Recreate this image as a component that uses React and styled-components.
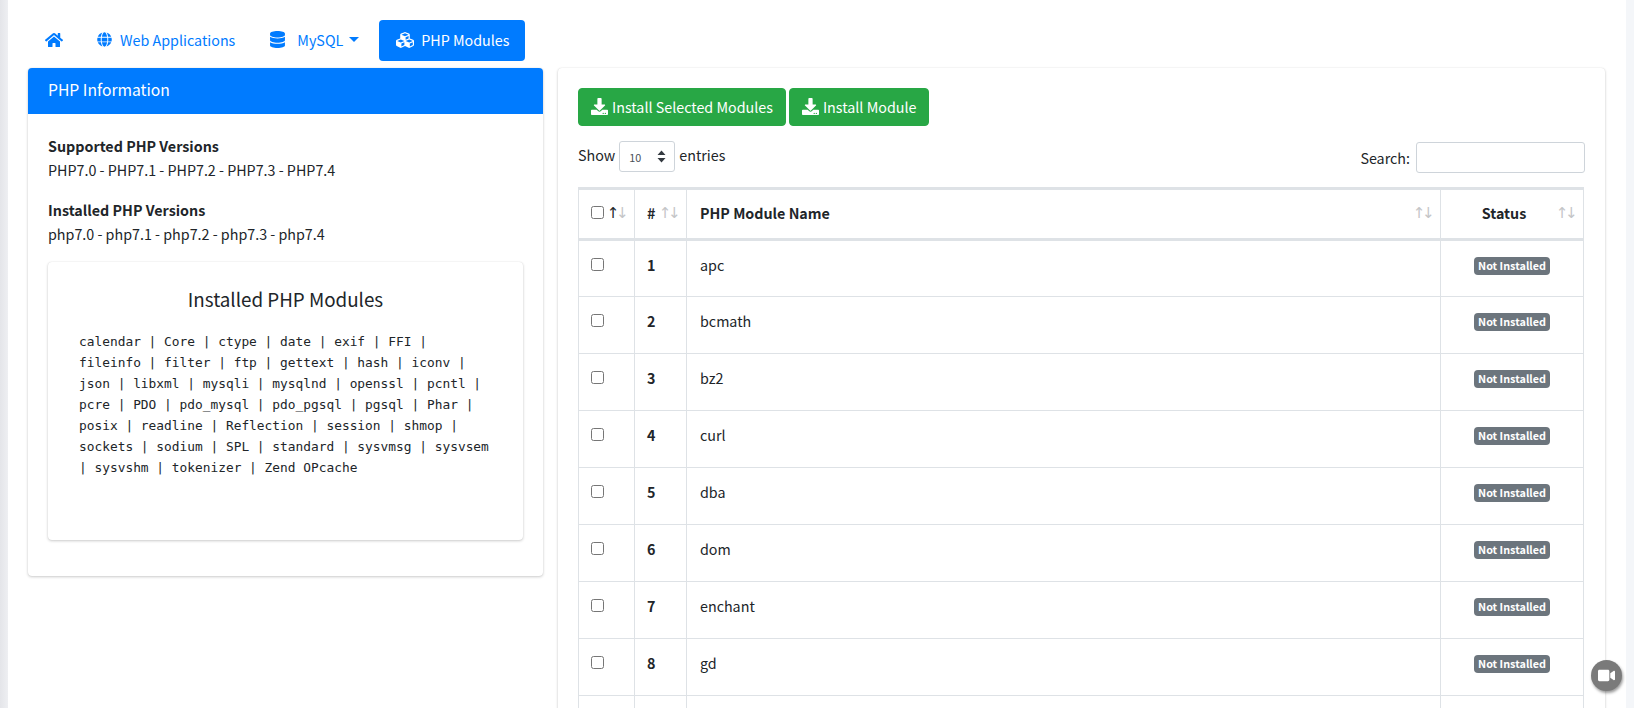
import React from 'react'
import styled, { createGlobalStyle } from 'styled-components'
import { FaHome, FaGlobe, FaDatabase, FaCubes, FaDownload, FaVideo } from 'react-icons/fa'

const SANS = `"Noto Sans CJK SC", "Noto Sans", sans-serif`
const MONO = `"DejaVu Sans Mono", "Liberation Mono", monospace`

const GlobalStyle = createGlobalStyle`
	html, body {
		margin: 0;
		height: 708px;
		overflow: hidden;
		background: linear-gradient(to right, #e4e5e9 0, #eeeff2 8px, #f4f6f9 8px);
		font-family: ${SANS};
		font-size: 14.3px;
		color: #212529;
	}
	* {
		box-sizing: border-box;
	}
`

const Shell = styled.div`
	margin: 0 8px;
	height: 708px;
	overflow: hidden;
	background: #fff;
	padding: 20px 21px 0 20px;
`

const TabBar = styled.nav`
	display: flex;
	gap: 1px;
	height: 41px;
	margin-bottom: 7px;
`

const Tab = styled.a`
	display: flex;
	align-items: center;
	gap: ${props => props.$gap || 8}px;
	padding: 0 16px 2px 17px;
	border-radius: 4px;
	font-size: 14.3px;
	color: ${props => props.$active ? '#fff' : '#007bff'};
	background: ${props => props.$active ? '#007bff' : 'transparent'};
	margin-left: ${props => props.$active ? 3 : 0}px;
`

const Caret = styled.span`
	width: 0;
	height: 0;
	margin-left: -5px;
	border-top: 5px solid #007bff;
	border-left: 5.5px solid transparent;
	border-right: 5.5px solid transparent;
`

const Columns = styled.div`
	display: flex;
	align-items: flex-start;
	gap: 15px;
`

const Card = styled.section`
	background: #fff;
	border-radius: 4px;
	box-shadow: 0 0 1px rgba(0, 0, 0, .125), 0 1px 3px rgba(0, 0, 0, .2);
`

const InfoCard = styled(Card)`
	width: 515px;
	flex: none;
	height: 508px;
	overflow: hidden;
`

const InfoHeader = styled.header`
	display: flex;
	align-items: center;
	height: 46px;
	padding: 0 20px 3px;
	background: #007bff;
	color: #fff;
	font-size: 15.7px;
`

const InfoBody = styled.div`
	padding: 20px 20px;
`

const VersionBlock = styled.div`
	margin-bottom: 16px;
	line-height: 24px;
`

const VersionTitle = styled.div`
	font-weight: 700;
`

const ModulesCard = styled(Card)`
	padding: 20px 31px 20px 31px;
	height: 278px;
	margin-top: 8px;
`

const ModulesTitle = styled.h3`
	margin: 2px 0 17px;
	text-align: center;
	font-size: 18.8px;
	font-weight: 400;
	line-height: 30px;
`

const ModulesText = styled.p`
	margin: 0;
	font-family: ${MONO};
	font-size: 12.85px;
	line-height: 21px;
	color: #212529;
`

const TableCard = styled(Card)`
	flex: 1;
	height: 700px;
	padding: 20px 20px;
`

const ButtonRow = styled.div`
	display: flex;
	gap: 3px;
	margin-bottom: 15px;
`

const GreenButton = styled.button`
	display: flex;
	align-items: center;
	gap: 4px;
	height: 38px;
	padding: 0 12px 2px 12px;
	border: 1px solid #28a745;
	border-radius: 4px;
	background: #28a745;
	color: #fff;
	font-family: ${SANS};
	font-size: 14.3px;
`

const Controls = styled.div`
	display: flex;
	justify-content: space-between;
	align-items: flex-start;
	height: 46px;
`

const ControlLabel = styled.label`
	display: flex;
	align-items: center;
	gap: 4px;
	font-size: 14.3px;
	margin-top: ${props => props.$offset || 0}px;
`

const ShowText = styled.span`
	position: relative;
	top: -2px;
`

const LengthSelect = styled.div`
	display: flex;
	align-items: center;
	justify-content: space-between;
	width: 56px;
	height: 31px;
	padding: 0 8px 0 9px;
	border: 1px solid #ced4da;
	border-radius: 3px;
	font-family: ${SANS};
	font-size: 10.8px;
	color: #495057;
`

const SearchBox = styled.input`
	width: 169px;
	height: 31px;
	margin-left: 2px;
	border: 1px solid #ced4da;
	border-radius: 3px;
`

const DataTable = styled.table`
	width: 1006px;
	table-layout: fixed;
	border-collapse: collapse;
	border: 1px solid #dee2e6;
	border-top: 3px solid #dee2e6;
`

const HeadCell = styled.th`
	position: relative;
	height: 51px;
	padding: 0 12px 4px ${props => props.$name ? 13 : 12}px;
	border: 1px solid #dee2e6;
	border-top: 0;
	border-bottom: 3px solid #dee2e6;
	text-align: ${props => props.$center ? 'center' : 'left'};
	font-size: 14.3px;
	font-weight: 700;
	padding-right: ${props => props.$center ? 28 : 12}px;
`

const SortArrows = styled.span`
	position: absolute;
	top: 13px;
	right: 9px;
	display: flex;
	font-family: "DejaVu Sans", sans-serif;
	font-size: 15px;
	line-height: 20px;
	font-weight: 400;
	letter-spacing: -3.5px;
	color: #c4c5c7;
`

const SortUp = styled.span`
	color: ${props => props.$on ? '#212529' : 'inherit'};
`

const Cell = styled.td`
	height: 57px;
	padding: 12px 12px 0 ${props => props.$name ? 13 : 12}px;
	vertical-align: top;
	border: 1px solid #dee2e6;
	font-size: 14.3px;
	line-height: 24px;
	font-weight: ${props => props.$bold ? 700 : 400};
	text-align: ${props => props.$center ? 'center' : 'left'};
`

const Tick = styled.input`
	display: block;
	margin: ${props => props.$row ? '5px 0 0' : '0'};
	width: 13px;
	height: 13px;
`

const Badge = styled.span`
	display: inline-block;
	vertical-align: top;
	margin-top: 4px;
	padding: 0 4.5px;
	height: 18px;
	border-radius: 4px;
	background: #6c757d;
	color: #fff;
	font-size: 10.8px;
	font-weight: 700;
	line-height: 17px;
	white-space: nowrap;
`

const VideoButton = styled.div`
	position: fixed;
	right: 12px;
	bottom: 17px;
	display: flex;
	align-items: center;
	justify-content: center;
	width: 31px;
	height: 31px;
	border-radius: 50%;
	background: #7a7a7a;
	color: #fff;
	font-size: 17px;
	box-shadow: 1px 2px 3px rgba(0, 0, 0, .4);
`

const MODULE_TEXT = 'calendar | Core | ctype | date | exif | FFI | fileinfo | filter | ftp | gettext | hash | iconv | json | libxml | mysqli | mysqlnd | openssl | pcntl | pcre | PDO | pdo_mysql | pdo_pgsql | pgsql | Phar | posix | readline | Reflection | session | shmop | sockets | sodium | SPL | standard | sysvmsg | sysvsem | sysvshm | tokenizer | Zend OPcache'

const ROWS = ['apc', 'bcmath', 'bz2', 'curl', 'dba', 'dom', 'enchant', 'gd']

const Sort = ({ on }) =>
	<SortArrows>
		<SortUp $on={on}>↑</SortUp>
		<span>↓</span>
	</SortArrows>

const SelectArrows = () =>
	<svg width="9" height="13" viewBox="0 0 9 13">
		<path d="M4.5 0.5 L8.5 5 L0.5 5 Z M0.5 8 L8.5 8 L4.5 12.5 Z" fill="#343a40" />
	</svg>

const App = () => {
	return (
		<>
			<GlobalStyle />
			<Shell>
				<TabBar>
					<Tab><FaHome size={18} /></Tab>
					<Tab><FaGlobe size={15} />Web Applications</Tab>
					<Tab $gap={11}><FaDatabase size={17} />MySQL<Caret /></Tab>
					<Tab $active $gap={7}><FaCubes size={18} />PHP Modules</Tab>
				</TabBar>
				<Columns>
					<InfoCard>
						<InfoHeader>PHP Information</InfoHeader>
						<InfoBody>
							<VersionBlock>
								<VersionTitle>Supported PHP Versions</VersionTitle>
								PHP7.0 - PHP7.1 - PHP7.2 - PHP7.3 - PHP7.4
							</VersionBlock>
							<VersionBlock>
								<VersionTitle>Installed PHP Versions</VersionTitle>
								php7.0 - php7.1 - php7.2 - php7.3 - php7.4
							</VersionBlock>
							<ModulesCard>
								<ModulesTitle>Installed PHP Modules</ModulesTitle>
								<ModulesText>{MODULE_TEXT}</ModulesText>
							</ModulesCard>
						</InfoBody>
					</InfoCard>
					<TableCard>
						<ButtonRow>
							<GreenButton><FaDownload size={17} />Install Selected Modules</GreenButton>
							<GreenButton><FaDownload size={17} />Install Module</GreenButton>
						</ButtonRow>
						<Controls>
							<ControlLabel>
								<ShowText>Show</ShowText>
								<LengthSelect>10<SelectArrows /></LengthSelect>
								<ShowText>entries</ShowText>
							</ControlLabel>
							<ControlLabel $offset={1}>
								Search:
								<SearchBox />
							</ControlLabel>
						</Controls>
						<DataTable>
							<colgroup>
								<col style={{ width: 56 }} />
								<col style={{ width: 52 }} />
								<col />
								<col style={{ width: 143 }} />
							</colgroup>
							<thead>
								<tr>
									<HeadCell><Tick type="checkbox" /><Sort on /></HeadCell>
									<HeadCell># <Sort /></HeadCell>
									<HeadCell $name>PHP Module Name<Sort /></HeadCell>
									<HeadCell $center>Status<Sort /></HeadCell>
								</tr>
							</thead>
							<tbody>
								{ROWS.map((name, i) =>
									<tr key={name}>
										<Cell><Tick $row type="checkbox" /></Cell>
										<Cell $bold>{i + 1}</Cell>
										<Cell $name>{name}</Cell>
										<Cell $center><Badge>Not Installed</Badge></Cell>
									</tr>
								)}
								<tr>
									<Cell />
									<Cell />
									<Cell />
									<Cell />
								</tr>
							</tbody>
						</DataTable>
					</TableCard>
				</Columns>
			</Shell>
			<VideoButton><FaVideo /></VideoButton>
		</>
	)
}

export default App
